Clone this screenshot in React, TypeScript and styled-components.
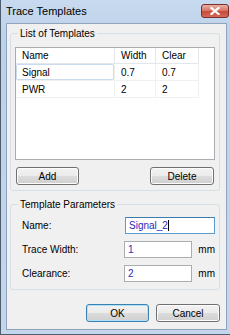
import styled, { createGlobalStyle } from 'styled-components';

const GlobalStyle = createGlobalStyle`
    html, body {
        margin: 0;
        padding: 0;
        background: #ffffff;
    }
    body {
        font-family: "Liberation Sans", Arial, sans-serif;
        font-size: 10px;
        color: #000000;
    }
`;

const Window = styled.div`
    width: 230px;
    height: 335px;
    box-sizing: border-box;
    display: flex;
    flex-direction: column;
    background: linear-gradient(#c8daef, #bcd1ea 40px, #c3d6ec);
    border-left: 1px solid #4e5d6e;
    border-bottom: 1px solid #4e5d6e;
`;

const TitleBar = styled.div`
    height: 22px;
    display: flex;
    align-items: center;
    justify-content: space-between;
    padding: 0 1px 1px 5px;
`;

const Title = styled.span`
    font-size: 11px;
    color: #000000;
`;

const CloseButton = styled.div`
    width: 26px;
    height: 12px;
    margin-top: -1px;
    display: flex;
    align-items: center;
    justify-content: center;
    border: 1px solid #7a2e2e;
    border-radius: 3px;
    background: linear-gradient(#eab0a4, #d8786a 45%, #c84a38 55%, #d4685a);
`;

const Client = styled.div`
    flex: 1;
    margin: 0 3px 4px 5px;
    background: #f0f0f0;
    border: 1px solid #90a5bd;
    padding: 3px 6px 0 3px;
    display: flex;
    flex-direction: column;
`;

const Group = styled.fieldset<{ $pad: string; $top?: number }>`
    margin: ${p => p.$top ?? 0}px 0 0 0;
    padding: ${p => p.$pad};
    border: 1px solid #d5dfe5;
    border-radius: 3px;
    min-width: 0;
`;

const Legend = styled.legend`
    padding: 0 2px;
    margin-left: 3px;
    line-height: 13px;
`;

const ListView = styled.div`
    height: 113px;
    box-sizing: border-box;
    margin-top: 7px;
    background: #ffffff;
    border: 1px solid #aaacb2;
`;

const Row = styled.div<{ $header?: boolean }>`
    display: flex;
    height: ${p => (p.$header ? '16px' : '17px')};
`;

const Cell = styled.div<{ $w: number; $header?: boolean; $focus?: boolean }>`
    width: ${p => p.$w}px;
    box-sizing: border-box;
    display: flex;
    align-items: center;
    padding-left: 6px;
    border-right: 1px solid ${p => (p.$header ? '#e3e6ea' : '#f0f0f0')};
    border-bottom: 1px solid ${p => (p.$header ? '#e3e6ea' : '#f0f0f0')};
    ${p => p.$focus && `box-shadow: inset 0 0 0 1px #c9dbef; border-radius: 2px;`}
`;

const ButtonRow = styled.div`
    display: flex;
    justify-content: space-between;
    margin-top: 7px;
    padding: 0 1px;
`;

const Button = styled.button<{ $w: number; $default?: boolean }>`
    width: ${p => p.$w}px;
    height: 18px;
    padding: 0;
    font-family: "Liberation Sans", Arial, sans-serif;
    font-size: 10px;
    color: #000000;
    border: 1px solid ${p => (p.$default ? '#3c7fb1' : '#707070')};
    border-radius: 3px;
    background: linear-gradient(#f2f2f2, #ebebeb 50%, #dddddd 50%, #cfcfcf);
    box-shadow: inset 0 0 0 1px ${p => (p.$default ? '#aee2f8' : '#fcfcfc')};
`;

const FieldRow = styled.div`
    display: flex;
    align-items: center;
    height: 17px;
    margin-top: 7px;

    &:first-of-type {
        margin-top: 6px;
    }
`;

const Label = styled.span`
    width: 110px;
    padding-left: 7px;
    box-sizing: border-box;
`;

const Input = styled.div<{ $w: number; $focus?: boolean }>`
    width: ${p => p.$w}px;
    height: 17px;
    box-sizing: border-box;
    display: flex;
    align-items: center;
    padding-left: 3px;
    background: #ffffff;
    color: #2a2ab8;
    border: 1px solid ${p => (p.$focus ? '#5b9bd5' : '#abadb3')};
    border-top-color: ${p => (p.$focus ? '#3d7bad' : '#abadb3')};
`;

const Caret = styled.span`
    display: inline-block;
    width: 1px;
    height: 11px;
    background: #000000;
`;

const Unit = styled.span`
    margin-left: 6px;
`;

const Footer = styled.div`
    display: flex;
    justify-content: flex-end;
    gap: 7px;
    margin-top: 14px;
`;

const columns = [
    { key: 'name', title: 'Name', w: 99 },
    { key: 'width', title: 'Width', w: 41 },
    { key: 'clear', title: 'Clear', w: 43 },
];

const templates = [
    { name: 'Signal', width: '0.7', clear: '0.7' },
    { name: 'PWR', width: '2', clear: '2' },
];

export default function App() {
    return (
        <>
            <GlobalStyle />
            <Window>
                <TitleBar>
                    <Title>Trace Templates</Title>
                    <CloseButton>
                        <svg width="10" height="8" viewBox="0 0 10 8">
                            <path d="M1.5 1 L8.5 7 M8.5 1 L1.5 7" stroke="#ffffff" strokeWidth="2.2" strokeLinecap="square" />
                        </svg>
                    </CloseButton>
                </TitleBar>
                <Client>
                    <Group $pad="0 4px 5px 4px">
                        <Legend>List of Templates</Legend>
                        <ListView>
                            <Row $header>
                                {columns.map(c => (
                                    <Cell key={c.key} $w={c.w} $header>{c.title}</Cell>
                                ))}
                            </Row>
                            {templates.map((t, i) => (
                                <Row key={t.name}>
                                    <Cell $w={99} $focus={i === 0}>{t.name}</Cell>
                                    <Cell $w={41}>{t.width}</Cell>
                                    <Cell $w={43}>{t.clear}</Cell>
                                </Row>
                            ))}
                        </ListView>
                        <ButtonRow>
                            <Button $w={63}>Add</Button>
                            <Button $w={64}>Delete</Button>
                        </ButtonRow>
                    </Group>
                    <Group $pad="0 4px 7px 4px" $top={7}>
                        <Legend>Template Parameters</Legend>
                        <FieldRow>
                            <Label>Name:</Label>
                            <Input $w={90} $focus>Signal_2<Caret /></Input>
                        </FieldRow>
                        <FieldRow>
                            <Label>Trace Width:</Label>
                            <Input $w={69}>1</Input>
                            <Unit>mm</Unit>
                        </FieldRow>
                        <FieldRow>
                            <Label>Clearance:</Label>
                            <Input $w={69}>2</Input>
                            <Unit>mm</Unit>
                        </FieldRow>
                    </Group>
                    <Footer>
                        <Button $w={63} $default>OK</Button>
                        <Button $w={64}>Cancel</Button>
                    </Footer>
                </Client>
            </Window>
        </>
    );
}
